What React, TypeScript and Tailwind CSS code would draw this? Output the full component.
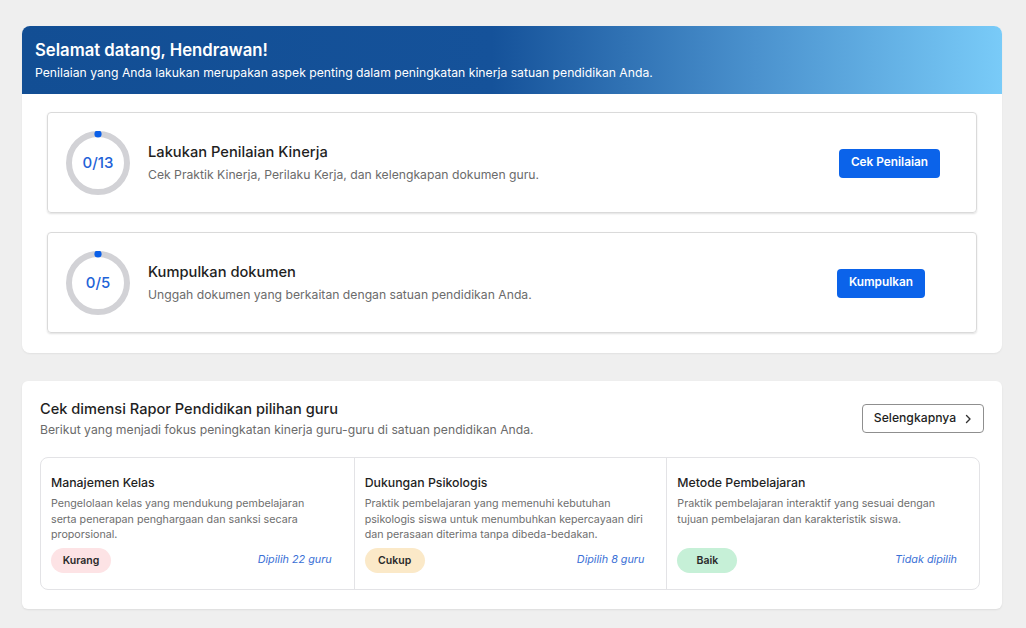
import React from 'react';

const font = { fontFamily: 'Inter, "Noto Sans", sans-serif' };

function ProgressRing({ label }: { label: string }) {
  return (
    <div className="relative w-[64px] h-[64px] shrink-0">
      <svg width="64" height="64" viewBox="0 0 64 64">
        <circle cx="32" cy="32" r="29" fill="none" stroke="#d2d2d6" strokeWidth="6" />
        <circle cx="32" cy="3" r="3.6" fill="#0a5fe8" />
      </svg>
      <div className="absolute inset-0 flex items-center justify-center text-[15px] font-medium text-[#1f63d8]">{label}</div>
    </div>
  );
}

function TaskCard({ label, title, desc, button, pr }: { label: string; title: string; desc: string; button: string; pr: string }) {
  return (
    <div className={`flex items-center border border-[#dadada] rounded-[4px] shadow-[0_1px_2px_rgba(0,0,0,0.12)] pl-[18px] pt-[18px] pb-[17px] ${pr}`}>
      <ProgressRing label={label} />
      <div className="ml-[18px] flex-1">
        <h3 className="text-[14.7px] font-medium text-[#1f1f1f] leading-[20px]">{title}</h3>
        <p className="text-[12.2px] text-[#6b6b6b] mt-[4px] leading-[18px]">{desc}</p>
      </div>
      <button className="bg-[#0b63ea] text-white text-[11.8px] font-semibold rounded-[4px] px-[12px] h-[29px]">{button}</button>
    </div>
  );
}

const dims = [
  {
    title: 'Manajemen Kelas',
    desc: 'Pengelolaan kelas yang mendukung pembelajaran serta penerapan penghargaan dan sanksi secara proporsional.',
    pill: 'Kurang',
    pillBg: 'bg-[#fde3e5]',
    note: 'Dipilih 22 guru',
  },
  {
    title: 'Dukungan Psikologis',
    desc: 'Praktik pembelajaran yang memenuhi kebutuhan psikologis siswa untuk menumbuhkan kepercayaan diri dan perasaan diterima tanpa dibeda-bedakan.',
    pill: 'Cukup',
    pillBg: 'bg-[#fbe9c8]',
    note: 'Dipilih 8 guru',
  },
  {
    title: 'Metode Pembelajaran',
    desc: 'Praktik pembelajaran interaktif yang sesuai dengan tujuan pembelajaran dan karakteristik siswa.',
    pill: 'Baik',
    pillBg: 'bg-[#c6f0d7]',
    note: 'Tidak dipilih',
  },
];

export default function App() {
  return (
    <div className="min-h-[628px] bg-[#efefef] px-[22px] pt-[26px] pb-[20px]" style={font}>
      <div className="w-[980px] bg-white rounded-[8px] shadow-[0_1px_2px_rgba(0,0,0,0.06)] overflow-hidden">
        <div className="h-[68px] px-[13px] pt-[12px] bg-[linear-gradient(90deg,#124e94_0%,#15529a_48%,#4b92ce_75%,#79cbf8_100%)]">
          <h1 className="text-[16.7px] font-semibold text-white leading-[24px]">Selamat datang, Hendrawan!</h1>
          <p className="text-[12.2px] text-white leading-[18px] mt-[2px]">
            Penilaian yang Anda lakukan merupakan aspek penting dalam peningkatan kinerja satuan pendidikan Anda.
          </p>
        </div>
        <div className="px-[25px] pt-[18px] pb-[20px] flex flex-col gap-[19px]">
          <TaskCard
            label="0/13"
            title="Lakukan Penilaian Kinerja"
            desc="Cek Praktik Kinerja, Perilaku Kerja, dan kelengkapan dokumen guru."
            button="Cek Penilaian"
            pr="pr-[36px]"
          />
          <TaskCard
            label="0/5"
            title="Kumpulkan dokumen"
            desc="Unggah dokumen yang berkaitan dengan satuan pendidikan Anda."
            button="Kumpulkan"
            pr="pr-[51px]"
          />
        </div>
      </div>

      <div className="w-[980px] mt-[28px] bg-white rounded-[6px] shadow-[0_1px_2px_rgba(0,0,0,0.08)] pl-[18px] pr-[18px] pt-[18px] pb-[19px]">
        <div className="flex items-start justify-between">
          <div>
            <h2 className="text-[14.6px] font-medium text-[#1f1f1f] leading-[20px]">Cek dimensi Rapor Pendidikan pilihan guru</h2>
            <p className="text-[12.2px] text-[#6b6b6b] leading-[18px] mt-[2px]">
              Berikut yang menjadi fokus peningkatan kinerja guru-guru di satuan pendidikan Anda.
            </p>
          </div>
          <button className="mt-[5px] h-[29px] w-[122px] border border-[#8f8f8f] rounded-[4px] flex items-center justify-center gap-[8px] text-[12.2px] font-medium text-[#1f1f1f]">
            Selengkapnya
            <svg width="8" height="10" viewBox="0 0 8 10" fill="none">
              <path d="M2.5 1.5L6 5L2.5 8.5" stroke="#333" strokeWidth="1.4" strokeLinecap="round" strokeLinejoin="round" />
            </svg>
          </button>
        </div>
        <div className="mt-[18px] mr-[4px] grid grid-cols-3 border border-[#e3e3e6] rounded-[8px] h-[133px]">
          {dims.map((d, i) => (
            <div key={i} className={`flex flex-col pl-[10px] pr-[22px] pt-[16px] pb-[16px] ${i > 0 ? 'border-l border-[#e3e3e6]' : ''}`}>
              <h4 className="text-[12.3px] font-medium text-[#1f1f1f] leading-[18px]">{d.title}</h4>
              <p className="text-[10.7px] text-[#6e6e6e] leading-[15.5px] mt-[4px]">{d.desc}</p>
              <div className="mt-auto flex items-center justify-between">
                <span className={`w-[60px] h-[25px] rounded-full flex items-center justify-center text-[10.5px] font-semibold text-[#2a2a2a] ${d.pillBg}`}>
                  {d.pill}
                </span>
                <span className="text-[10.8px] italic text-[#3a70d6]">{d.note}</span>
              </div>
            </div>
          ))}
        </div>
      </div>
    </div>
  );
}
